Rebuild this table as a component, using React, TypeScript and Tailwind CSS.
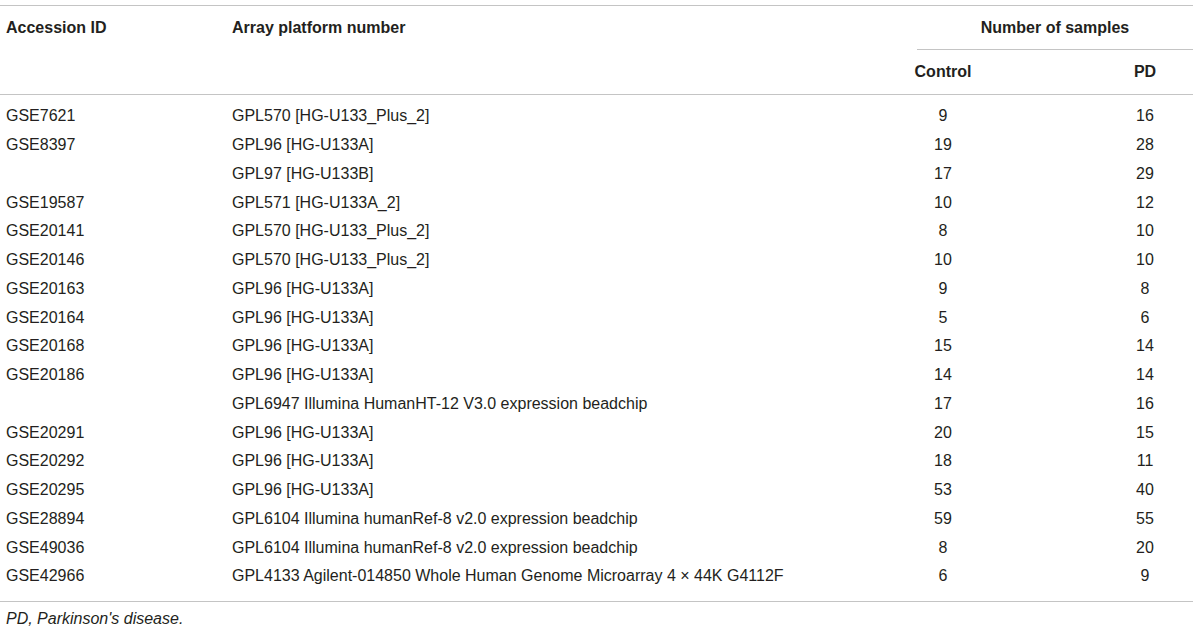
const ROWS: [string, string, string, string][] = [
  ['GSE7621', 'GPL570 [HG-U133_Plus_2]', '9', '16'],
  ['GSE8397', 'GPL96 [HG-U133A]', '19', '28'],
  ['', 'GPL97 [HG-U133B]', '17', '29'],
  ['GSE19587', 'GPL571 [HG-U133A_2]', '10', '12'],
  ['GSE20141', 'GPL570 [HG-U133_Plus_2]', '8', '10'],
  ['GSE20146', 'GPL570 [HG-U133_Plus_2]', '10', '10'],
  ['GSE20163', 'GPL96 [HG-U133A]', '9', '8'],
  ['GSE20164', 'GPL96 [HG-U133A]', '5', '6'],
  ['GSE20168', 'GPL96 [HG-U133A]', '15', '14'],
  ['GSE20186', 'GPL96 [HG-U133A]', '14', '14'],
  ['', 'GPL6947 Illumina HumanHT-12 V3.0 expression beadchip', '17', '16'],
  ['GSE20291', 'GPL96 [HG-U133A]', '20', '15'],
  ['GSE20292', 'GPL96 [HG-U133A]', '18', '11'],
  ['GSE20295', 'GPL96 [HG-U133A]', '53', '40'],
  ['GSE28894', 'GPL6104 Illumina humanRef-8 v2.0 expression beadchip', '59', '55'],
  ['GSE49036', 'GPL6104 Illumina humanRef-8 v2.0 expression beadchip', '8', '20'],
  ['GSE42966', 'GPL4133 Agilent-014850 Whole Human Genome Microarray 4 × 44K G4112F', '6', '9'],
];

const GRID = 'grid grid-cols-[232px_661px_100px_104px_96px]';

export default function App() {
  return (
    <div className="w-[1200px] h-[631px] bg-white pt-[5px] font-['Liberation_Sans',Arial,sans-serif] text-[16px] text-[#231f20]">
      <div className="w-[1193px] border-t border-[#c4c4c4]">
        {/* Header */}
        <div className={`${GRID} border-b border-[#c4c4c4] font-bold leading-5`}>
          <div className="pl-[6px] pt-[12px]">Accession ID</div>
          <div className="pt-[12px]">Array platform number</div>
          <div className="col-span-3 pl-6">
            <div className="pt-[12px] pb-[11px] text-center border-b border-[#c4c4c4]">Number of samples</div>
          </div>
          <div className="col-start-3 text-center pt-[12px] pb-[12px]">Control</div>
          <div className="col-start-5 text-center pt-[12px] pb-[12px]">PD</div>
        </div>

        {/* Body */}
        <div className="pt-[7px] pb-[10px] border-b border-[#c4c4c4]">
          {ROWS.map(([acc, platform, control, pd], i) => (
            <div key={i} className={`${GRID} h-[28.75px] items-center`}>
              <div className="pl-[6px]">{acc}</div>
              <div className="whitespace-nowrap">{platform}</div>
              <div className="text-center">{control}</div>
              <div />
              <div className="text-center">{pd}</div>
            </div>
          ))}
        </div>
      </div>

      <p className="pl-[6px] pt-[5px] italic">PD, Parkinson's disease.</p>
    </div>
  );
}
